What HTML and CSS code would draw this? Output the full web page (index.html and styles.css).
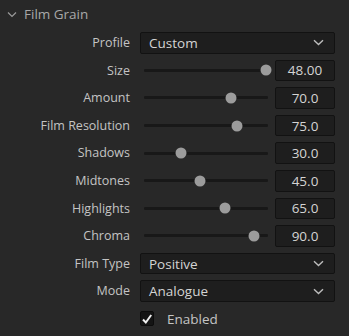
FILE: index.html
```html
<!DOCTYPE html>
<html>
<head>
<meta charset="utf-8">
<link rel="stylesheet" href="styles.css">
</head>
<body>
<div class="panel">
  <div class="header">
    <svg class="chev" width="10" height="7" viewBox="0 0 10 7"><path d="M1 1.5 L5 5.5 L9 1.5" fill="none" stroke="#9a9a9a" stroke-width="1.2"/></svg>
    <span class="title">Film Grain</span>
  </div>
  <div class="rows">
    <div class="label">Profile</div>
    <div class="select"><span>Custom</span><svg width="11" height="7" viewBox="0 0 11 7"><path d="M1 1.2 L5.5 5.5 L10 1.2" fill="none" stroke="#bdbdbd" stroke-width="1.4"/></svg></div>

    <div class="label">Size</div>
    <div class="slider"><div class="track"><div class="knob" style="left:98%"></div></div><div class="value">48.00</div></div>

    <div class="label">Amount</div>
    <div class="slider"><div class="track"><div class="knob" style="left:70%"></div></div><div class="value">70.0</div></div>

    <div class="label">Film Resolution</div>
    <div class="slider"><div class="track"><div class="knob" style="left:75%"></div></div><div class="value">75.0</div></div>

    <div class="label">Shadows</div>
    <div class="slider"><div class="track"><div class="knob" style="left:30%"></div></div><div class="value">30.0</div></div>

    <div class="label">Midtones</div>
    <div class="slider"><div class="track"><div class="knob" style="left:45%"></div></div><div class="value">45.0</div></div>

    <div class="label">Highlights</div>
    <div class="slider"><div class="track"><div class="knob" style="left:65%"></div></div><div class="value">65.0</div></div>

    <div class="label">Chroma</div>
    <div class="slider"><div class="track"><div class="knob" style="left:89%"></div></div><div class="value">90.0</div></div>

    <div class="label">Film Type</div>
    <div class="select"><span>Positive</span><svg width="11" height="7" viewBox="0 0 11 7"><path d="M1 1.2 L5.5 5.5 L10 1.2" fill="none" stroke="#bdbdbd" stroke-width="1.4"/></svg></div>

    <div class="label">Mode</div>
    <div class="select"><span>Analogue</span><svg width="11" height="7" viewBox="0 0 11 7"><path d="M1 1.2 L5.5 5.5 L10 1.2" fill="none" stroke="#bdbdbd" stroke-width="1.4"/></svg></div>

    <div class="label"></div>
    <div class="check"><div class="box"><svg width="12" height="12" viewBox="0 0 12 12"><path d="M2 6.5 L4.8 9.5 L10.2 2" fill="none" stroke="#f0f0f0" stroke-width="2"/></svg></div><span>Enabled</span></div>
  </div>
</div>
</body>
</html>
```

FILE: styles.css
```css
html, body {
  margin: 0;
  padding: 0;
  background: #282828;
}
body {
  font-family: "Open Sans", "Noto Sans", sans-serif;
  color: #c9c9c9;
  width: 349px;
  height: 336px;
  overflow: hidden;
}
.panel {
  padding: 0 14px 0 0;
}
.header {
  height: 27px;
  display: flex;
  align-items: center;
  padding-left: 7px;
  gap: 7px;
}
.title {
  font-size: 13.5px;
  color: #a8a8a8;
}
.chev {
  margin-top: 1px;
}
.rows {
  display: grid;
  grid-template-columns: 130px 1fr;
  column-gap: 10px;
  grid-auto-rows: 21.6px;
  row-gap: 6px;
  padding-top: 5px;
}
.label {
  text-align: right;
  font-size: 12.5px;
  line-height: 21px;
  color: #c4c4c4;
}
.select {
  box-sizing: border-box;
  height: 21.6px;
  background: #1e1e1e;
  border: 1px solid #121212;
  border-radius: 2px;
  display: flex;
  align-items: center;
  justify-content: space-between;
  padding: 0 10px 0 8px;
  font-size: 13.5px;
  color: #d4d4d4;
}
.slider {
  display: flex;
  align-items: center;
  gap: 7px;
}
.track {
  position: relative;
  flex: 1;
  height: 3px;
  margin-left: 4px;
  background: #181818;
  border-radius: 1px;
}
.knob {
  position: absolute;
  top: 50%;
  width: 11px;
  height: 11px;
  border-radius: 50%;
  background: #9c9c9c;
  transform: translate(-50%, -50%);
}
.value {
  box-sizing: border-box;
  width: 60px;
  height: 21.6px;
  background: #1e1e1e;
  border: 1px solid #121212;
  border-radius: 2px;
  display: flex;
  align-items: center;
  justify-content: center;
  font-size: 13.5px;
  color: #d4d4d4;
}
.check {
  display: flex;
  align-items: center;
  gap: 13px;
  font-size: 13.5px;
  color: #c4c4c4;
}
.box {
  box-sizing: border-box;
  width: 14px;
  height: 15px;
  background: #141414;
  border: 1px solid #0c0c0c;
  border-radius: 2px;
  display: flex;
  align-items: center;
  justify-content: center;
}
```
